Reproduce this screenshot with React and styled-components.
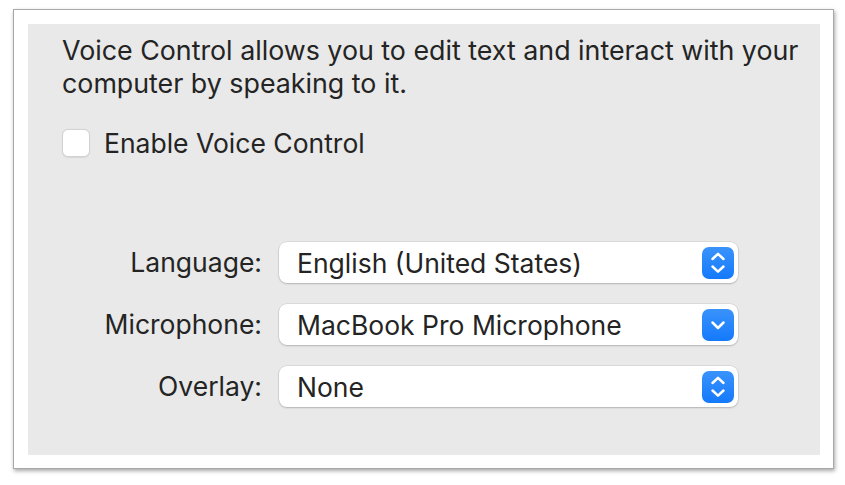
import { Fragment } from "react";
import styled, { createGlobalStyle } from "styled-components";

const Global = createGlobalStyle`
  html, body {
    margin: 0;
    padding: 0;
    background: #ffffff;
  }
  body {
    font-family: Inter, "Liberation Sans", Arial, sans-serif;
    color: #242424;
  }
`;

const Page = styled.div`
  width: 845px;
  height: 485px;
  padding: 9px 0 0 13px;
  box-sizing: border-box;
`;

const Frame = styled.div`
  width: 821px;
  height: 460px;
  box-sizing: border-box;
  background: #ffffff;
  border: 1px solid #a8a8a8;
  box-shadow: 1px 2px 4px rgba(0, 0, 0, 0.35);
  padding: 14px 13px 13px 14px;
  display: flex;
`;

const Panel = styled.div`
  flex: 1;
  background: #e8e9e8;
  padding: 10px 10px 0 34px;
  display: flex;
  flex-direction: column;
`;

const Intro = styled.p`
  margin: 0;
  font-size: 26.8px;
  line-height: 33px;
`;

const CheckRow = styled.label`
  display: flex;
  align-items: center;
  gap: 14px;
  margin-top: 27px;
  font-size: 26.5px;
`;

const Box = styled.span`
  width: 28px;
  height: 28px;
  box-sizing: border-box;
  border-radius: 6px;
  background: #ffffff;
  border: 1px solid #d2d2d2;
  box-shadow: 0 0.5px 1px rgba(0, 0, 0, 0.08);
`;

const Form = styled.div`
  display: grid;
  grid-template-columns: 200px 459px;
  column-gap: 17px;
  row-gap: 21px;
  margin-top: 83px;
`;

const Label = styled.div`
  font-size: 26.5px;
  text-align: right;
  line-height: 41px;
`;

const Popup = styled.div`
  height: 41px;
  box-sizing: border-box;
  background: #ffffff;
  border-radius: 8px;
  box-shadow: 0 0 0 0.5px rgba(0, 0, 0, 0.12), 0 1px 2px rgba(0, 0, 0, 0.18);
  display: flex;
  align-items: center;
  justify-content: space-between;
  padding: 0 4px 0 18px;
  font-size: 26.5px;
`;

const Arrow = styled.span`
  width: 32px;
  height: 32px;
  border-radius: 7px;
  background: linear-gradient(#3a93fc, #1479fb);
  display: flex;
  align-items: center;
  justify-content: center;
`;

function Stepper({ single }) {
  return (
    <Arrow>
      <svg width="32" height="32" viewBox="0 0 32 32" fill="none" stroke="#fff" strokeWidth="2.5" strokeLinecap="round" strokeLinejoin="round">
        {single ? (
          <path d="M10.5 13.5L16 19l5.5-5.5" />
        ) : (
          <>
            <path d="M10.5 12L16 6.8l5.5 5.2" />
            <path d="M10.5 19.5L16 24.7l5.5-5.2" />
          </>
        )}
      </svg>
    </Arrow>
  );
}

const rows = [
  { label: "Language:", value: "English (United States)" },
  { label: "Microphone:", value: "MacBook Pro Microphone", single: true },
  { label: "Overlay:", value: "None" },
];

export default function App() {
  return (
    <Page>
      <Global />
      <Frame>
        <Panel>
          <Intro>
            Voice Control allows you to edit text and interact with your computer by speaking to it.
          </Intro>
          <CheckRow>
            <Box />
            Enable Voice Control
          </CheckRow>
          <Form>
            {rows.map((r) => (
              <Fragment key={r.label}>
                <Label>{r.label}</Label>
                <Popup>
                  <span>{r.value}</span>
                  <Stepper single={r.single} />
                </Popup>
              </Fragment>
            ))}
          </Form>
        </Panel>
      </Frame>
    </Page>
  );
}
